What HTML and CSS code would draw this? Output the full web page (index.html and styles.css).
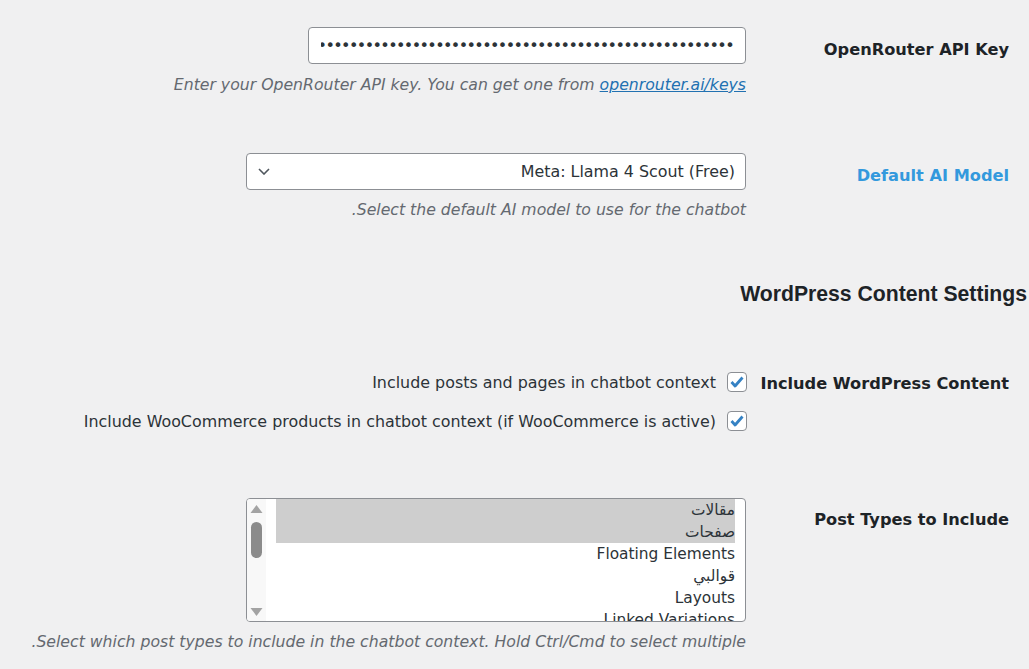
FILE: index.html
```html
<!DOCTYPE html>
<html lang="ar" dir="rtl">
<head>
    <meta charset="UTF-8">
    <meta name="viewport" content="width=device-width, initial-scale=1.0">
    <title>Chatbot Settings</title>
    <link rel="stylesheet" href="styles.css">
</head>
<body>
    <div class="wrap">
        <div class="row row-key">
            <label class="row-label" for="api-key">OpenRouter API Key</label>
            <div class="row-field">
                <input class="text-input" type="password" id="api-key" value="sk-or-v1-00000000000000000000000000000000000000000000">
                <p class="description" dir="ltr">Enter your OpenRouter API key. You can get one from <a href="#">openrouter.ai/keys</a></p>
            </div>
        </div>

        <div class="row row-model">
            <label class="row-label label-active" for="model">Default AI Model</label>
            <div class="row-field">
                <div class="select-box" id="model">
                    <span class="select-value">Meta: Llama 4 Scout (Free)</span>
                    <svg class="chevron" width="12" height="7" viewBox="0 0 12 7"><path d="M1 1l5 5 5-5" fill="none" stroke="#50575e" stroke-width="1.6"/></svg>
                </div>
                <p class="description">Select the default AI model to use for the chatbot.</p>
            </div>
        </div>

        <h2 class="section-title">WordPress Content Settings</h2>

        <div class="row row-content">
            <div class="row-label">Include WordPress Content</div>
            <div class="row-field">
                <label class="check-line">
                    <span class="checkbox"><svg width="18" height="18" viewBox="0 0 18 18"><path d="M3.5 9l3.6 4 7.4-8.5" fill="none" stroke="#3582c4" stroke-width="2.8" stroke-linejoin="round"/></svg></span>
                    <span class="check-text">Include posts and pages in chatbot context</span>
                </label>
                <label class="check-line">
                    <span class="checkbox"><svg width="18" height="18" viewBox="0 0 18 18"><path d="M3.5 9l3.6 4 7.4-8.5" fill="none" stroke="#3582c4" stroke-width="2.8" stroke-linejoin="round"/></svg></span>
                    <span class="check-text">Include WooCommerce products in chatbot context (if WooCommerce is active)</span>
                </label>
            </div>
        </div>

        <div class="row row-types">
            <div class="row-label">Post Types to Include</div>
            <div class="row-field">
                <div class="listbox">
                    <ul class="options">
                        <li class="selected">مقالات</li>
                        <li class="selected">صفحات</li>
                        <li>Floating Elements</li>
                        <li>قوالبي</li>
                        <li>Layouts</li>
                        <li>Linked Variations</li>
                    </ul>
                    <div class="scrollbar">
                        <svg width="19" height="122" viewBox="0 0 19 122">
                            <path d="M3.5 14L9.5 6l6 8z" fill="#a3a3a3"/>
                            <rect x="4" y="23" width="11" height="36" rx="5.5" fill="#8b8b8b"/>
                            <path d="M3.5 109h12l-6 8z" fill="#a3a3a3"/>
                        </svg>
                    </div>
                </div>
                <p class="description">Select which post types to include in the chatbot context. Hold Ctrl/Cmd to select multiple.</p>
            </div>
        </div>
    </div>
</body>
</html>
```

FILE: styles.css
```css
body {
    margin: 0;
    background-color: #f0f0f1;
    color: #2c3338;
    font-family: "DejaVu Sans", Tahoma, sans-serif;
    font-size: 15.9px;
    line-height: 20px;
}

.wrap {
    padding: 27px 2px 0 0;
}

.row {
    display: grid;
    grid-template-columns: 263px 1fr;
    padding-right: 18px;
}

.row-label {
    font-weight: bold;
    font-size: 16.2px;
    color: #1d2327;
    text-align: right;
}

.label-active {
    color: #3399dd;
}

.row-field {
    display: flex;
    flex-direction: column;
    align-items: flex-start;
}

.row-key .row-label { padding-top: 13px; }
.row-model { margin-top: 58px; }
.row-model .row-label { padding-top: 13px; }
.row-content { margin-top: 66px; }
.row-content .row-label { padding-top: 2px; }
.row-types { margin-top: 67px; }
.row-types .row-label { padding-top: 12px; }

.text-input {
    box-sizing: border-box;
    width: 438px;
    height: 37px;
    padding: 0 12px;
    border: 1px solid #8c8f94;
    border-radius: 4px;
    background: #fff;
    color: #2c3338;
    font-family: "DejaVu Sans", sans-serif;
    font-size: 16px;
    letter-spacing: -1.6px;
}

.description {
    margin: 11px 0 0;
    color: #646970;
    font-style: italic;
    font-size: 15.7px;
    line-height: 20px;
}

.description a {
    color: #2271b1;
}

.row-model .description,
.row-types .description {
    margin-top: 10px;
}

.select-box {
    box-sizing: border-box;
    width: 500px;
    height: 37px;
    display: flex;
    align-items: center;
    justify-content: space-between;
    padding: 0 10px 0 11px;
    border: 1px solid #8c8f94;
    border-radius: 4px;
    background: #fff;
    color: #2c3338;
}

.select-value {
    padding-top: 1px;
}

.section-title {
    margin: 62px 0 0;
    font-family: "Liberation Sans", Arial, sans-serif;
    font-size: 21.2px;
    line-height: 24px;
    color: #1d2327;
}

.check-line {
    display: flex;
    align-items: center;
    gap: 11px;
    height: 20px;
    margin-right: -1px;
    color: #2c3338;
}

.check-line + .check-line {
    margin-top: 19px;
}

.check-text {
    padding-top: 2px;
}

.checkbox {
    box-sizing: border-box;
    width: 20px;
    height: 20px;
    display: flex;
    align-items: center;
    justify-content: center;
    border: 1px solid #8c8f94;
    border-radius: 4px;
    background: #fff;
}

.listbox {
    box-sizing: border-box;
    width: 500px;
    height: 124px;
    display: flex;
    border: 1px solid #8c8f94;
    border-radius: 4px;
    background: #fff;
    overflow: hidden;
}

.options {
    flex: 1;
    margin: 0;
    padding: 0 10px;
    list-style: none;
    font-size: 15.4px;
}

.options li {
    height: 22px;
    line-height: 22px;
    white-space: nowrap;
}

.options .selected {
    background-color: #cecece;
}

.scrollbar {
    width: 19px;
    background: #f8f8f8;
}

.scrollbar svg {
    display: block;
}
```
